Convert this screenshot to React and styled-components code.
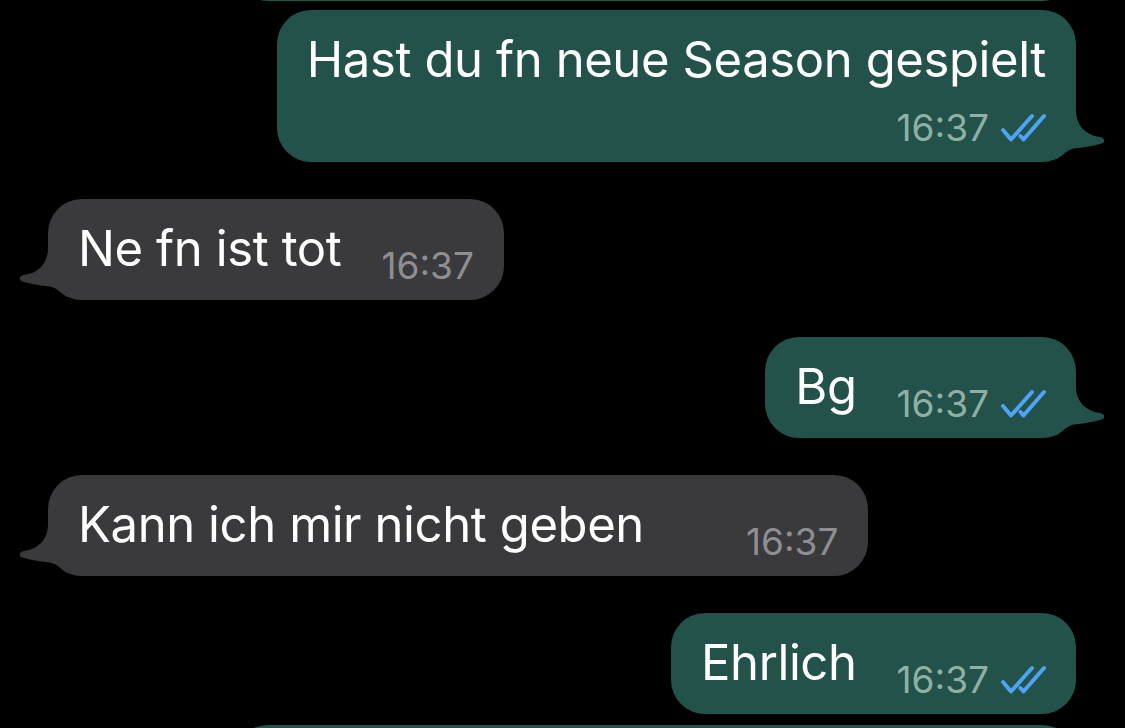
import React from "react";
import styled, { createGlobalStyle } from "styled-components";

const GlobalStyle = createGlobalStyle`
  html, body {
    margin: 0;
    padding: 0;
    background: #000;
    overflow: hidden;
  }
  body {
    font-family: "Inter", "Noto Sans", sans-serif;
    -webkit-font-smoothing: antialiased;
  }
`;

const messages = [
  { out: true, text: "Ja ich hab gestern den ganzen Abend gespielt", time: "16:36", stacked: true, gap: 0 },
  { out: true, text: "Hast du fn neue Season gespielt", time: "16:37", stacked: true, tail: true, gap: 9 },
  { out: false, text: "Ne fn ist tot", time: "16:37", tail: true, gap: 37 },
  { out: true, text: "Bg", time: "16:37", tail: true, gap: 37 },
  { out: false, text: "Kann ich mir nicht geben", time: "16:37", tail: true, trail: 62, gap: 37 },
  { out: true, text: "Ehrlich", time: "16:37", gap: 37 },
  { out: true, text: "Aber die neue Map ist schon ziemlich gut geworden", time: "16:38", stacked: true, tail: true, gap: 11 },
];

function Checks() {
  return (
    <CheckIcon width="46" height="30" viewBox="0 0 46 30">
      <path d="M3 17 L11 26.5 L32 3" />
      <path d="M20.5 23 L23.5 26.5 L44 3" />
    </CheckIcon>
  );
}

function Tail({ out }) {
  return (
    <TailShape $out={out} width="60" height="60" viewBox="-30 -60 60 60">
      <path d="M-30 -60 L0 -60 L0 -52 C0 -37 9 -27 24 -25 C29 -24.5 29.5 -19.5 25.5 -18.5 C17 -16 8 -14.5 -2 -13.5 C-9 -12 -14 -7 -19 -3 L-30 -3 Z" />
    </TailShape>
  );
}

function Message({ m }) {
  return (
    <Row $out={m.out} $gap={m.gap}>
      <Bubble $out={m.out} $stacked={m.stacked}>
        {m.tail && <Tail out={m.out} />}
        <Text $stacked={m.stacked} $trail={m.trail}>{m.text}</Text>
        <Meta $out={m.out} $stacked={m.stacked}>
          <span>{m.time}</span>
          {m.out && <Checks />}
        </Meta>
      </Bubble>
    </Row>
  );
}

export default function App() {
  return (
    <Screen>
      <GlobalStyle />
      <Feed>
        {messages.map((m, i) => (
          <Message key={i} m={m} />
        ))}
      </Feed>
    </Screen>
  );
}

const Screen = styled.div`
  width: 1125px;
  height: 728px;
  overflow: hidden;
  background: #000;
`;

const Feed = styled.div`
  display: flex;
  flex-direction: column;
  padding: 0 49px 0 48px;
  margin-top: -211px;
`;

const Row = styled.div`
  display: flex;
  justify-content: ${(p) => (p.$out ? "flex-end" : "flex-start")};
  margin-top: ${(p) => p.$gap}px;
`;

const Bubble = styled.div`
  position: relative;
  z-index: 0;
  box-sizing: border-box;
  max-width: 842px;
  display: flex;
  flex-direction: ${(p) => (p.$stacked ? "column" : "row")};
  align-items: flex-end;
  padding: 20px 30px 14px 30px;
  border-radius: 34px;
  background: ${(p) => (p.$out ? "#225249" : "#3a3a3c")};
`;

const Text = styled.div`
  align-self: ${(p) => (p.$stacked ? "flex-start" : "auto")};
  color: #fff;
  font-size: 49px;
  line-height: 60px;
  letter-spacing: -0.4px;
  margin-bottom: 7px;
  padding-right: ${(p) => p.$trail || 0}px;
`;

const Meta = styled.div`
  display: flex;
  align-items: center;
  gap: 11px;
  height: 40px;
  margin-left: ${(p) => (p.$stacked ? "0" : "40px")};
  margin-top: ${(p) => (p.$stacked ? "11px" : "0")};
  font-size: 37px;
  line-height: 40px;
  white-space: nowrap;
  color: ${(p) => (p.$out ? "#8fb0a5" : "#8e8e93")};
`;

const CheckIcon = styled.svg`
  display: block;
  flex-shrink: 0;
  fill: none;
  stroke: #4fa3f4;
  stroke-width: 4;
  stroke-linecap: round;
  stroke-linejoin: round;
`;

const TailShape = styled.svg`
  position: absolute;
  z-index: -1;
  bottom: 0;
  ${(p) => (p.$out ? "right: -30px;" : "left: -30px; transform: scaleX(-1);")}
  fill: ${(p) => (p.$out ? "#225249" : "#3a3a3c")};
`;
